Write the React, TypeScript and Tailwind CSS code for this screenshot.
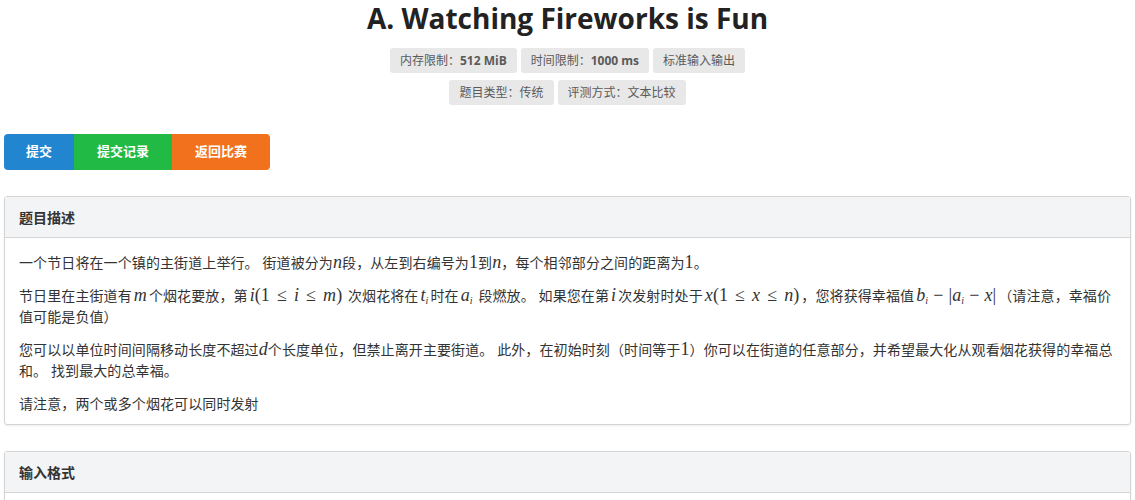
const M = ({ children, wide }: { children: React.ReactNode; wide?: boolean }) => (
  <span className={`font-['Liberation_Serif',serif] text-[18px] leading-none ${wide ? 'mx-[2px]' : ''}`}>{children}</span>
);
const I = ({ children }: { children: React.ReactNode }) => <i className="italic">{children}</i>;
const Sub = ({ children }: { children: React.ReactNode }) => (
  <span className="relative top-[3px] text-[10px] leading-none">{children}</span>
);
// relation / binary operator with KaTeX-like spacing
const Rel = ({ children }: { children: React.ReactNode }) => <span className="mx-[7px]">{children}</span>;
const Bin = ({ children }: { children: React.ReactNode }) => <span className="mx-[5px]">{children}</span>;

function Badge({ label, value }: { label: string; value?: string }) {
  return (
    <span className="inline-flex h-[25px] items-center rounded-[3px] bg-[#e8e8e8] px-[10px] text-[12px] text-[#5a5a5a]">
      {label}
      {value && <b className="font-bold">{value}</b>}
    </span>
  );
}

function Panel({ title, children }: { title: string; children?: React.ReactNode }) {
  return (
    <div className="mx-1 rounded-[3px] border border-[#d4d4d5] shadow-[0_1px_2px_rgba(0,0,0,0.08)]">
      <div className="flex h-[41px] items-center border-b border-[#d4d4d5] bg-[#f3f4f5] px-[14px] text-[14px] font-bold text-[#333]">
        {title}
      </div>
      {children}
    </div>
  );
}

export default function App() {
  return (
    <div className="min-h-[500px] bg-white font-['Open_Sans','Noto_Sans_CJK_SC',sans-serif] text-[14px] text-[#333]">
      <h1 className="text-center text-[28px] font-bold leading-[36px] text-[#222]">
        A. Watching Fireworks is Fun
      </h1>
      <div className="mt-[12px] flex flex-col items-center gap-[7px]">
        <div className="flex gap-1">
          <Badge label="内存限制：" value="512 MiB" />
          <Badge label="时间限制：" value="1000 ms" />
          <Badge label="标准输入输出" />
        </div>
        <div className="flex gap-1">
          <Badge label="题目类型：传统" />
          <Badge label="评测方式：文本比较" />
        </div>
      </div>

      <div className="mx-1 mt-[29px] flex text-[13px] font-bold text-white">
        <button className="h-[36px] w-[70px] rounded-l-[4px] bg-[#2185d0]">提交</button>
        <button className="h-[36px] w-[98px] bg-[#21ba45]">提交记录</button>
        <button className="h-[36px] w-[98px] rounded-r-[4px] bg-[#f2711c]">返回比赛</button>
      </div>

      <div className="mt-[26px]">
        <Panel title="题目描述">
          <div className="space-y-[12px] px-[14px] pt-[14px] pb-[10px] leading-[21px] tracking-[0.1px]">
            <p>
              一个节日将在一个镇的主街道上举行。 街道被分为<M><I>n</I></M>段，从左到右编号为<M>1</M>到<M><I>n</I></M>，每个相邻部分之间的距离为<M>1</M>。
            </p>
            <p>
              节日里在主街道有<M wide><I>m</I></M>个烟花要放，第<M wide><I>i</I>(1<Rel>≤</Rel><I>i</I><Rel>≤</Rel><I>m</I>)</M> 次烟花将在<M wide><I>t<Sub>i</Sub></I></M>时在<M wide><I>a<Sub>i</Sub></I></M> 段燃放。 如果您在第<M wide><I>i</I></M>次发射时处于<M wide><I>x</I>(1<Rel>≤</Rel><I>x</I><Rel>≤</Rel><I>n</I>)</M>，您将获得幸福值<M wide><I>b<Sub>i</Sub></I><Bin>−</Bin>|<I>a<Sub>i</Sub></I><Bin>−</Bin><I>x</I>|</M>（请注意，幸福价值可能是负值）
            </p>
            <p>
              您可以以单位时间间隔移动长度不超过<M><I>d</I></M>个长度单位，但禁止离开主要街道。 此外，在初始时刻（时间等于<M>1</M>）你可以在街道的任意部分，并希望最大化从观看烟花获得的幸福总和。 找到最大的总幸福。
            </p>
            <p>请注意，两个或多个烟花可以同时发射</p>
          </div>
        </Panel>
      </div>

      <div className="mt-[26px]">
        <Panel title="输入格式">
          <div className="h-[20px]" />
        </Panel>
      </div>
    </div>
  );
}
